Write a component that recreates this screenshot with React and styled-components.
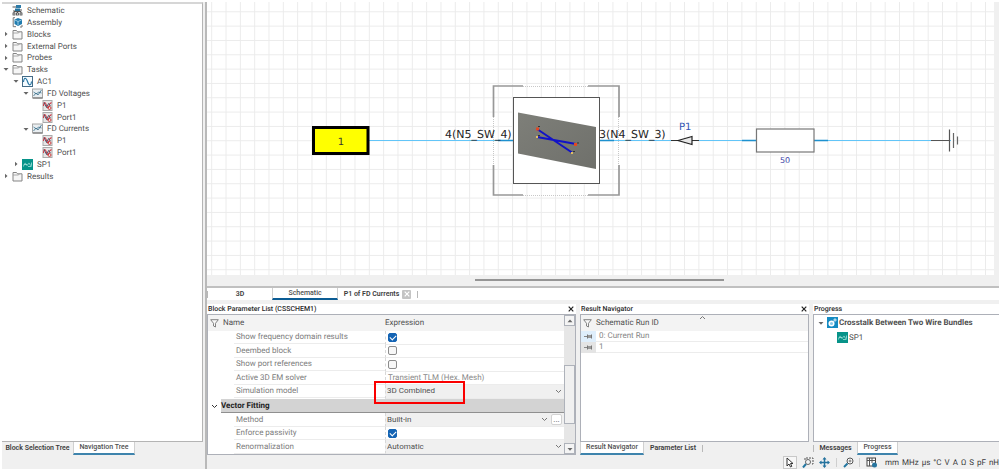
import React from "react";
import styled, { createGlobalStyle, css } from "styled-components";

const Global = createGlobalStyle`
  * { box-sizing: border-box; }
  body { margin: 0; background: #f0f0f0; overflow: hidden; text-rendering: geometricPrecision; }
  body, button, input, select { font-family: Roboto, "Open Sans", sans-serif; font-size: 8px; color: #505050; }
  button { border: 0; padding: 0; background: none; }
  svg { display: block; }
`;

const Page = styled.div`
  height: 100vh;
  display: flex;
  background: #f0f0f0;
  border-top: 2px solid #ffffff;
  border-left: 2px solid #ffffff;
`;
const Sidebar = styled.aside`
  width: 201px;
  flex: none;
  display: flex;
  flex-direction: column;
  padding-bottom: 14px;
`;
const TreeBox = styled.nav`
  flex: 1;
  min-height: 0;
  background: #fff;
  border: 1px solid #b4b4b4;
  border-top: 2px solid #d6d6d6;
  border-left: 0;
`;
const List = styled.ul`
  list-style: none;
  margin: 0;
  padding: 0;
`;
const TreeRow = styled.li`
  display: flex;
  align-items: center;
  height: ${(p) => (p.$tall ? 15 : 12)}px;
  padding-left: ${(p) => p.$level * 10}px;
  font-weight: ${(p) => (p.$bold ? 700 : 400)};
  white-space: nowrap;
`;
const NavRow = styled(TreeRow)`
  &:nth-child(6n + 5) { height: 11px; }
`;
const Twist = styled.button`
  width: 8px;
  height: 10px;
  display: grid;
  place-items: center;
`;
const IconSlot = styled.span`
  width: ${(p) => (p.$tight ? 12 : 15)}px;
  margin-left: 2px;
`;
const Main = styled.main`
  flex: 1;
  min-width: 0;
  display: flex;
  flex-direction: column;
  margin-left: 2px;
  border-left: 2px solid #b9b9b9;
`;
const CanvasPane = styled.section`
  flex: 1;
  min-height: 0;
  display: flex;
  flex-direction: column;
  padding-right: 5px;
  border-bottom: 2px solid #c0c0c0;
`;
const Drawing = styled.svg`
  flex: 1;
  min-height: 0;
  width: 100%;
  background: #fff;
  font-family: "DejaVu Sans", sans-serif;
`;
const HScroll = styled.div`
  height: 11px;
  padding: 4px 0 0 268px;
`;
const HThumb = styled.div`
  width: 48%;
  height: 2px;
  background: #959595;
`;
const Tabs = styled.div`
  display: flex;
  flex: none;
  height: ${(p) => p.$h || 13}px;
  align-items: stretch;
  background: ${(p) => (p.$white ? "#fff" : "transparent")};
`;
const Tab = styled.button`
  width: ${(p) => p.$w}px;
  display: flex;
  align-items: center;
  justify-content: center;
  gap: 3px;
  font-size: 7px;
  font-weight: ${(p) => (p.$active ? 500 : 600)};
  line-height: 9px;
  color: #3c3c3c;
  white-space: nowrap;
  ${(p) =>
    p.$active &&
    css`
      background: #fff;
      border: 1px solid #d0d0d0;
      border-top: 0;
      border-bottom: 2px solid ${p.$tone || "#3e84ad"};
      color: #505050;
    `}
`;
const TabClose = styled.span`
  width: 9px;
  height: 9px;
  border-radius: 1px;
  background: #c4c4c4;
  color: #fff;
  display: grid;
  place-items: center;
`;
const TabRule = styled.span`
  width: 1px;
  height: 7px;
  align-self: center;
  background: #b8b8b8;
`;
const Lower = styled.div`
  height: 151px;
  flex: none;
  display: flex;
  gap: 4px;
  margin-top: 4px;
`;
const Panel = styled.section`
  display: flex;
  flex-direction: column;
  min-width: 0;
  flex: ${(p) => p.$flex};
`;
const PanelTitle = styled.header`
  height: 10px;
  flex: none;
  display: flex;
  align-items: center;
  justify-content: space-between;
  padding: 0 2px 0 1px;
  background: #fff;
  color: #2a2a2a;
  font-size: 7px;
  font-weight: 500;
  line-height: 9px;
`;
const PanelBody = styled.div`
  flex: 1;
  min-height: 0;
  display: flex;
  background: #fff;
  border: 1px solid #adb0b8;
  border-right-width: ${(p) => (p.$openRight ? 0 : 1)}px;
`;
const Table = styled.table`
  flex: 1;
  width: 100%;
  height: ${(p) => (p.$fill ? "100%" : "auto")};
  align-self: flex-start;
  border-collapse: separate;
  border-spacing: 0;
  table-layout: fixed;
  td, th { padding: 0; text-align: left; font-weight: 400; white-space: nowrap; line-height: 10px; }
`;
const HeadCell = styled.th`
  height: 16px;
  background: #f3f3f3;
`;
const HeadLabel = styled.span`
  display: flex;
  align-items: center;
  gap: 4px;
  padding-left: 2px;
`;
const NameCell = styled.td`
  color: #7c7c7c;
  & > label, & > span { display: block; margin-left: 26px; padding-left: 2px; border-bottom: 1px solid #ececec; line-height: 12px; }
`;
const ValueCell = styled.td`
  background: ${(p) => (p.$field ? "#f0f0f0" : "#fff")};
  border-left: 1px dashed #d8d8d8;
  border-bottom: 1px solid #ececec;
  color: #8a8a8a;
`;
const Field = styled.div`
  display: flex;
  align-items: center;
  height: 12px;
  padding-right: 2px;
  gap: 3px;
`;
const Static = styled.span`
  padding-left: 2px;
`;
const Select = styled.select`
  appearance: none;
  flex: 1;
  min-width: 0;
  height: 12px;
  padding: 0 0 0 1px;
  border: 0;
  background: transparent;
  line-height: 12px;
`;
const More = styled.button`
  width: 11px;
  height: 11px;
  background: #fff;
  border: 1px solid #d2d2d2;
  border-radius: 2px;
  line-height: 6px;
`;
const Check = styled.input`
  appearance: none;
  width: 9px;
  height: 9px;
  margin: 0 0 0 2px;
  border: 1px solid #8c8c8c;
  border-radius: 2px;
  background: #f7f7f7;
  display: grid;
  place-items: center;
  &:checked { background: #1464b4; border-color: #1464b4; }
  &:checked::after {
    content: "";
    width: 5px;
    height: 3px;
    border: solid #fff;
    border-width: 0 0 1px 1px;
    transform: rotate(-45deg);
  }
`;
const GroupCell = styled.td`
  color: #222;
  & > span { display: flex; align-items: center; }
  b { flex: 1; background: #d3d3d3; border-bottom: 1px solid #8f8f8f; line-height: 13px; }
`;
const GroupArrow = styled.button`
  width: 13px;
  display: grid;
  place-items: center;
`;
const VScroll = styled.div`
  width: 11px;
  flex: none;
  display: flex;
  flex-direction: column;
  background: #e6e6e6;
`;
const ScrollButton = styled.button`
  height: 11px;
  flex: none;
  border: 1px solid #aeb2ba;
  background: #f4f4f4;
  display: grid;
  place-items: center;
`;
const VTrack = styled.div`
  flex: 1;
  padding-top: 39px;
`;
const VThumb = styled.div`
  height: 59px;
  background: #f0f0f0;
  border: 1px solid #aeb2ba;
`;
const Highlight = styled.div`
  position: absolute;
  left: 166px;
  top: 66px;
  width: 91px;
  height: 23px;
  border: 2px solid #fa0000;
  pointer-events: none;
`;
const TableWrap = styled.div`
  position: relative;
  flex: 1;
  min-width: 0;
`;
const SortHead = styled(HeadLabel)`
  position: relative;
`;
const SortMark = styled.span`
  position: absolute;
  top: -3px;
  left: 118px;
`;
const RunPin = styled.td`
  height: 11px;
  background: ${(p) => (p.$blue ? "#dfeefb" : "#e4e4e4")};
  svg { margin: auto; }
`;
const RunName = styled.td`
  color: #858585;
  border-bottom: 1px solid #ececec;
  span { padding-left: 3px; }
`;
const ProgressTree = styled(List)`
  padding: 0 0 0 3px;
`;
const Status = styled.footer`
  height: 14px;
  flex: none;
  display: flex;
  align-items: center;
  justify-content: flex-end;
  overflow: hidden;
  color: #3c3c3c;
`;
const ToolButton = styled.button`
  width: 14px;
  height: 13px;
  flex: none;
  margin-right: ${(p) => p.$gap || 0}px;
  display: grid;
  place-items: center;
  border: 1px solid ${(p) => (p.$on ? "#c8c8c8" : "transparent")};
  background: ${(p) => (p.$on ? "#f7f7f7" : "transparent")};
`;
const ToolRule = styled.span`
  width: 1px;
  height: 9px;
  margin-right: 5px;
  background: #cfcfcf;
`;
const Units = styled.div`
  display: flex;
  gap: 3px;
  white-space: nowrap;
`;

const Folder = () => (
  <svg width="11" height="11" viewBox="0 0 11 11">
    <path d="M1 10V1.500h3.500l1 1.300h4.500V10z" fill="#f6f6f6" stroke="#858585" />
    <path d="M1 4h5.500l1-1.200" fill="none" stroke="#999" strokeWidth=".8" />
  </svg>
);
const SchematicIcon = () => (
  <svg width="11" height="11" viewBox="0 0 11 11">
    <path d="M.5 2H4M6 5h4M2 5v4M5.500 5v4M2 6.500h7V9" stroke="#555" fill="none" />
    <rect x="4" y="0" width="5" height="3" fill="#2d7ba8" />
    <rect x="3" y="3.500" width="5" height="2.500" fill="#26749f" />
    <g fill="#fff" stroke="#444" strokeWidth=".8">
      <rect x="1" y="8" width="2" height="2" />
      <rect x="4.500" y="8" width="2" height="2" />
      <rect x="8" y="8" width="2" height="2" />
    </g>
  </svg>
);
const AssemblyIcon = () => (
  <svg width="11" height="11" viewBox="0 0 11 11">
    <path d="M3 .7H1.200v9H4M8 10h2V8" fill="none" stroke="#777" />
    <path d="M6 1l4 1.500v4.500L6 9 2.500 7V2.500z" fill="#207caf" />
    <path d="M3 3l3 1.500L9.500 3M6 4.500V8" fill="none" stroke="#b9ddee" strokeWidth=".8" />
  </svg>
);
const AcIcon = () => (
  <svg width="11" height="11" viewBox="0 0 11 11">
    <rect x=".5" y=".5" width="10" height="10" fill="#f5fbff" stroke="#446b86" />
    <path d="M1.500 6C2 1 4 1 5.500 5.500S9 10 9.500 5.500" fill="none" stroke="#2373a2" strokeWidth="1.100" />
  </svg>
);
const PlotIcon = () => (
  <svg width="11" height="11" viewBox="0 0 11 11">
    <rect x=".5" y="1" width="10" height="9" fill="#e9eef1" stroke="#a5a5a5" />
    <path d="M1.500 8l2.500-3 2 2 3.500-5M1.500 4l3 2 2-2 3 1" fill="none" stroke="#366d8a" strokeWidth=".8" />
    <path d="M1 10h9.500" stroke="#666" />
  </svg>
);
const CurveIcon = () => (
  <svg width="11" height="11" viewBox="0 0 11 11">
    <rect x="1" y=".5" width="9" height="10" fill="#e6e6e6" stroke="#aaa" />
    <path d="M1.500 6c.5-5 2-4 3-.5S7 8 7.500 4l2-1.500" fill="none" stroke="#cf3944" strokeWidth="1.100" />
    <path d="M2 2.500l2.500 5 2-4 2 2.500" fill="none" stroke="#46546b" strokeWidth=".9" />
    <circle cx="7.500" cy="8" r="1.500" fill="none" stroke="#c33" strokeWidth=".9" />
  </svg>
);
const SpIcon = () => (
  <svg width="11" height="11" viewBox="0 0 11 11">
    <rect width="11" height="11" fill="#079389" />
    <path d="M1.500 7.500c1-4 2-4 3-1.500 1 2 1.500-2 2.500-2s.5 3 2.500 2.500V3.500M2 5.500h3M6 7.500h3.500" fill="none" stroke="#a5e1db" strokeWidth=".8" />
  </svg>
);
const ProjectIcon = () => (
  <svg width="11" height="11" viewBox="0 0 11 11">
    <rect width="11" height="11" fill="#158bc2" />
    <circle cx="4.500" cy="6.500" r="2.300" fill="#8bcbe8" stroke="#fff" strokeWidth="1.500" />
    <circle cx="8" cy="3" r="1.100" fill="none" stroke="#fff" strokeWidth=".9" />
  </svg>
);
const Triangle = ({ open }) => (
  <svg width="6" height="6" viewBox="0 0 6 6">
    <path d={open ? "M.5 2h5L3 4.800z" : "M2 .8v4.400L4.500 3z"} fill="#666" />
  </svg>
);
const UpTriangle = () => (
  <svg width="6" height="6" viewBox="0 0 6 6">
    <path d="M.5 4.200h5L3 1.400z" fill="#666" />
  </svg>
);
const Chevron = ({ color = "#777", up }) => (
  <svg width="7" height="5" viewBox="0 0 7 5">
    <path d={up ? "M1 4l2.500-2.500L6 4" : "M1 1l2.500 2.500L6 1"} fill="none" stroke={color} strokeWidth="1" />
  </svg>
);
const Cross = ({ size = 6, color = "#222" }) => (
  <svg width={size} height={size} viewBox="0 0 6 6">
    <path d="M.7.700l4.600 4.600M5.300.700L.7 5.300" stroke={color} strokeWidth="1.200" />
  </svg>
);
const Funnel = () => (
  <svg width="9" height="9" viewBox="0 0 9 9">
    <path d="M.7.700h7.600L5.500 4.300V8L3.500 7V4.300z" fill="#f8f8f8" stroke="#777" strokeWidth=".9" />
  </svg>
);
const Pin = () => (
  <svg width="9" height="5" viewBox="0 0 9 5">
    <path d="M0 2.500h3" stroke="#888" />
    <path d="M3.500 1h4.500v3H3.500z" fill="#999" />
    <path d="M3.500 .5v4M7.500 .5v4" stroke="#777" />
  </svg>
);

const icons = { folder: Folder, schematic: SchematicIcon, assembly: AssemblyIcon, ac: AcIcon, plot: PlotIcon, curve: CurveIcon, sp: SpIcon };

const tree = [
  ["Schematic", "schematic", 0],
  ["Assembly", "assembly", 0],
  ["Blocks", "folder", 0, "closed"],
  ["External Ports", "folder", 0, "closed"],
  ["Probes", "folder", 0, "closed"],
  ["Tasks", "folder", 0, "open"],
  ["AC1", "ac", 1, "open"],
  ["FD Voltages", "plot", 2, "open"],
  ["P1", "curve", 3],
  ["Port1", "curve", 3],
  ["FD Currents", "plot", 2, "open"],
  ["P1", "curve", 3],
  ["Port1", "curve", 3],
  ["SP1", "sp", 1, "closed"],
  ["Results", "folder", 0, "closed"],
];

const params = [
  { name: "Show frequency domain results", check: true },
  { name: "Deembed block", check: false },
  { name: "Show port references", check: false },
  { name: "Active 3D EM solver", text: "Transient TLM (Hex. Mesh)" },
  { name: "Simulation model", select: "3D Combined" },
  { group: "Vector Fitting" },
  { name: "Method", select: "Built-in", more: true },
  { name: "Enforce passivity", check: true },
  { name: "Renormalization", select: "Automatic" },
];

const Schematic = () => (
  <Drawing role="img" aria-label="Circuit schematic">
    <defs>
      <pattern id="grid" x="4.200" y="9.300" width="14.330" height="14.330" patternUnits="userSpaceOnUse">
        <path d="M.5 0V14.330M0 .5H14.330" stroke="#ebebeb" fill="none" />
      </pattern>
      <linearGradient id="plate" x1="0" y1="0" x2="1" y2="1">
        <stop offset="0" stopColor="#7e7f79" />
        <stop offset="1" stopColor="#6f706b" />
      </linearGradient>
    </defs>
    <rect width="100%" height="100%" fill="url(#grid)" />
    <g transform="translate(-207 -2)">
      <path d="M369 140.500H952" stroke="#62c5f8" strokeWidth="1.200" />
      <path d="M498 140.500h15M599 140.500h15M742 140.500h15M814 140.500h14" stroke="#1d91cf" strokeWidth="1.400" />
      <rect x="313.500" y="127.500" width="54.500" height="26" fill="#ff0" stroke="#000" strokeWidth="3" />
      <text x="341" y="145" textAnchor="middle" fontSize="10" fill="#333">1</text>
      <g fill="none">
        <path d="M493.500 117V86H523M588 86h31v31M619 165v30h-31M523 195h-29.500v-30" stroke="#989898" strokeWidth="1.700" />
        <path d="M523 86.500h65M523 195.500h65M493.500 117v48M618.500 117v48" stroke="#c8c8c8" strokeDasharray="1 1" />
      </g>
      <rect x="513.500" y="97.500" width="86" height="86" fill="#fff" stroke="#555" />
      <path d="M518 112.500l78 14.500v42l-78-15.500z" fill="url(#plate)" />
      <path d="M537 129l35 23.500M537 137l39 7" stroke="#1112c7" strokeWidth="2" />
      <path d="M536 127.500h3v3h-3zM574 143h3v3h-3z" fill="#e44622" />
      <path d="M536 136h2v2h-2zM571 152h2v2h-2z" fill="#e2be62" />
      <path d="M538 126.500h2M538 135.500h2M577 143h2M573 151.500h2" stroke="#333" strokeWidth="1.200" />
      <text x="445" y="138" fontSize="11" fill="#252525">4(N5_SW_4)</text>
      <text x="599" y="138" fontSize="11" fill="#252525">3(N4_SW_3)</text>
      <text x="679" y="130" fontSize="10" fill="#3155b5">P1</text>
      <path d="M671 140.500h28" stroke="#333" />
      <path d="M678 140.500l14-4v8z" fill="#e8e8e8" stroke="#222" strokeWidth="1.200" />
      <rect x="756.500" y="129" width="57.500" height="23" fill="#fff" stroke="#777" strokeWidth="1.200" />
      <text x="785" y="163" textAnchor="middle" fontSize="8" fill="#4046a8">50</text>
      <path d="M931 140.500h18.500M949.500 129.500v22" stroke="#555" strokeWidth="1.200" />
      <path d="M951 140.500h3" stroke="#fff" strokeWidth="2" />
      <path d="M953.500 133v15M957.500 136.500v8" stroke="#666" strokeWidth="1.200" />
    </g>
  </Drawing>
);

const ParamRow = ({ row, id }) => {
  if (row.group)
    return (
      <tr>
        <GroupCell colSpan={2}>
          <span>
            <GroupArrow aria-label="Collapse group"><Chevron color="#333" /></GroupArrow>
            <b>{row.group}</b>
          </span>
        </GroupCell>
      </tr>
    );
  return (
    <tr>
      <NameCell>{row.text ? <span>{row.name}</span> : <label htmlFor={id}>{row.name}</label>}</NameCell>
      <ValueCell $field={!!row.select}>
        <Field>
          {row.text && <Static>{row.text}</Static>}
          {"check" in row && <Check type="checkbox" id={id} defaultChecked={row.check} />}
          {row.select && (
            <>
              <Select id={id} defaultValue={row.select}><option>{row.select}</option></Select>
              <Chevron />
            </>
          )}
          {row.more && <More aria-label="More options">...</More>}
        </Field>
      </ValueCell>
    </tr>
  );
};

export default function App() {
  return (
    <>
      <Global />
      <Page>
        <Sidebar>
          <TreeBox aria-label="Navigation tree">
            <List>
              {tree.map(([label, icon, level, state], i) => {
                const Icon = icons[icon];
                return (
                  <NavRow key={i} $level={level}>
                    {state ? (
                      <Twist aria-label={`Toggle ${label}`}><Triangle open={state === "open"} /></Twist>
                    ) : (
                      <Twist as="span" />
                    )}
                    <IconSlot><Icon /></IconSlot>
                    {label}
                  </NavRow>
                );
              })}
            </List>
          </TreeBox>
          <Tabs>
            <Tab $w={71}>Block Selection Tree</Tab>
            <Tab $w={62} $active>Navigation Tree</Tab>
          </Tabs>
        </Sidebar>
        <Main>
          <CanvasPane>
            <Schematic />
            <HScroll><HThumb /></HScroll>
          </CanvasPane>
          <Tabs $h={12} $white>
            <TabRule />
            <Tab $w={64}>3D</Tab>
            <Tab $w={66} $active $tone="#0b5c94">Schematic</Tab>
            <Tab $w={79}>P1 of FD Currents<TabClose><Cross color="#fff" /></TabClose></Tab>
            <TabRule />
          </Tabs>
          <Lower>
            <Panel $flex="0 0 369px">
              <PanelTitle>Block Parameter List (CSSCHEM1)<button aria-label="Close parameter list"><Cross /></button></PanelTitle>
              <PanelBody>
                <TableWrap>
                  <Table $fill>
                    <colgroup><col width="177" /><col /></colgroup>
                    <thead>
                      <tr>
                        <HeadCell><HeadLabel><Funnel />Name</HeadLabel></HeadCell>
                        <HeadCell>Expression</HeadCell>
                      </tr>
                    </thead>
                    <tbody>
                      {params.map((row, i) => <ParamRow key={i} row={row} id={`param-${i}`} />)}
                    </tbody>
                  </Table>
                  <Highlight />
                </TableWrap>
                <VScroll>
                  <ScrollButton aria-label="Scroll up"><UpTriangle /></ScrollButton>
                  <VTrack><VThumb /></VTrack>
                  <ScrollButton aria-label="Scroll down"><Triangle open /></ScrollButton>
                </VScroll>
              </PanelBody>
            </Panel>
            <Panel $flex="0 0 229px">
              <PanelTitle>Result Navigator<button aria-label="Close result navigator"><Cross /></button></PanelTitle>
              <PanelBody>
                <Table>
                  <colgroup><col width="15" /><col /></colgroup>
                  <thead>
                    <tr>
                      <HeadCell colSpan={2}>
                        <SortHead><Funnel />Schematic Run ID<SortMark><Chevron up /></SortMark></SortHead>
                      </HeadCell>
                    </tr>
                  </thead>
                  <tbody>
                    <tr><RunPin $blue><Pin /></RunPin><RunName><span>0: Current Run</span></RunName></tr>
                    <tr><RunPin><Pin /></RunPin><RunName><span>1</span></RunName></tr>
                  </tbody>
                </Table>
              </PanelBody>
              <Tabs>
                <Tab $w={64} $active>Result Navigator</Tab>
                <Tab $w={58}>Parameter List</Tab>
                <TabRule />
              </Tabs>
            </Panel>
            <Panel $flex="1">
              <PanelTitle>Progress</PanelTitle>
              <PanelBody $openRight>
                <ProgressTree>
                  <TreeRow $level={0} $tall $bold>
                    <Twist aria-label="Toggle project"><Triangle open /></Twist>
                    <IconSlot $tight><ProjectIcon /></IconSlot>
                    Crosstalk Between Two Wire Bundles
                  </TreeRow>
                  <TreeRow $level={1} $tall>
                    <Twist as="span" />
                    <IconSlot $tight><SpIcon /></IconSlot>
                    SP1
                  </TreeRow>
                </ProgressTree>
              </PanelBody>
              <Tabs>
                <TabRule />
                <Tab $w={43}>Messages</Tab>
                <Tab $w={41} $active>Progress</Tab>
              </Tabs>
            </Panel>
          </Lower>
          <Status>
            <ToolButton $on $gap={4} aria-label="Select">
              <svg width="8" height="11" viewBox="0 0 8 11"><path d="M1 1v8l2-2 1.500 3 1.300-.7L4.500 6.500H7z" fill="#fff" stroke="#333" /></svg>
            </ToolButton>
            <ToolButton $gap={3} aria-label="Zoom to area">
              <svg width="12" height="11" viewBox="0 0 12 11"><path d="M3 3V1h8v6H9" fill="none" stroke="#555" strokeDasharray="2 1" /><circle cx="6" cy="5" r="2.500" fill="#f4f4f4" stroke="#666" /><path d="M4 7L1 10.500" stroke="#2376a0" strokeWidth="2" /></svg>
            </ToolButton>
            <ToolButton $gap={4} aria-label="Pan">
              <svg width="11" height="11" viewBox="0 0 11 11"><path d="M5.500 1v9M1 5.500h9" stroke="#25739e" strokeWidth="1.500" /><path d="M5.500 0l2 2.500h-4zM5.500 11l2-2.500h-4zM0 5.500l2.500-2v4zM11 5.500l-2.500-2v4z" fill="#25739e" /></svg>
            </ToolButton>
            <ToolRule />
            <ToolButton $gap={3} aria-label="Zoom">
              <svg width="11" height="11" viewBox="0 0 11 11"><circle cx="7" cy="4" r="3" fill="#fff" stroke="#555" /><path d="M5.500 4h3M7 2.500v3" stroke="#777" /><path d="M4.500 6.500L1 10" stroke="#2376a0" strokeWidth="2" /></svg>
            </ToolButton>
            <ToolRule />
            <ToolButton $gap={6} aria-label="Units">
              <svg width="11" height="11" viewBox="0 0 11 11"><rect x="1" y="1" width="8.500" height="8" fill="#fff" stroke="#444" /><path d="M1 3.500h8.500M3.500 1v8M6 1v5" stroke="#555" /><circle cx="8.500" cy="8" r="2.500" fill="#26749e" /></svg>
            </ToolButton>
            <Units>
              {["mm", "MHz", "µs", "°C", "V", "A", "Ω", "S", "pF", "nH"].map((u) => <span key={u}>{u}</span>)}
            </Units>
          </Status>
        </Main>
      </Page>
    </>
  );
}
